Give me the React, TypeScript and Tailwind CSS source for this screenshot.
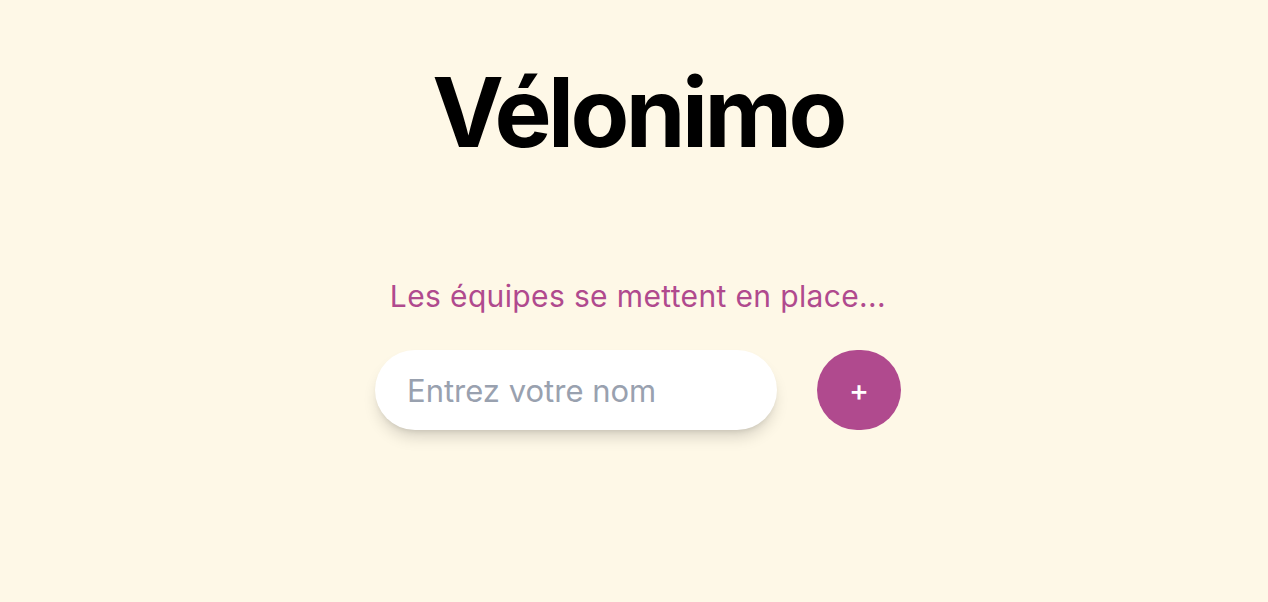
import React from "react";

const App = () => {
  return (
    <div
      className="min-h-[602px] w-full bg-[#fef8e7] pl-2 flex flex-col items-center"
      style={{ fontFamily: "Inter, 'Noto Sans', sans-serif" }}
    >
      <h1 className="mt-[52px] text-8xl font-bold tracking-[-0.037em] text-black leading-[120px]">
        Vélonimo
      </h1>

      <p className="mt-[104px] text-3xl tracking-[0.012em] leading-10 text-[#b04a8e]">
        Les équipes se mettent en place...
      </p>

      <div className="mt-[34px] flex items-center gap-10">
        <input
          type="text"
          placeholder="Entrez votre nom"
          className="h-20 w-[402px] rounded-full bg-white px-8 text-[31px] text-gray-800 placeholder:text-gray-400 shadow-lg shadow-black/15 outline-none"
        />
        <button className="flex h-20 w-[84px] items-center justify-center rounded-full bg-[#b04a8e] text-3xl font-medium text-white">
          +
        </button>
      </div>
    </div>
  );
};

export default App;
